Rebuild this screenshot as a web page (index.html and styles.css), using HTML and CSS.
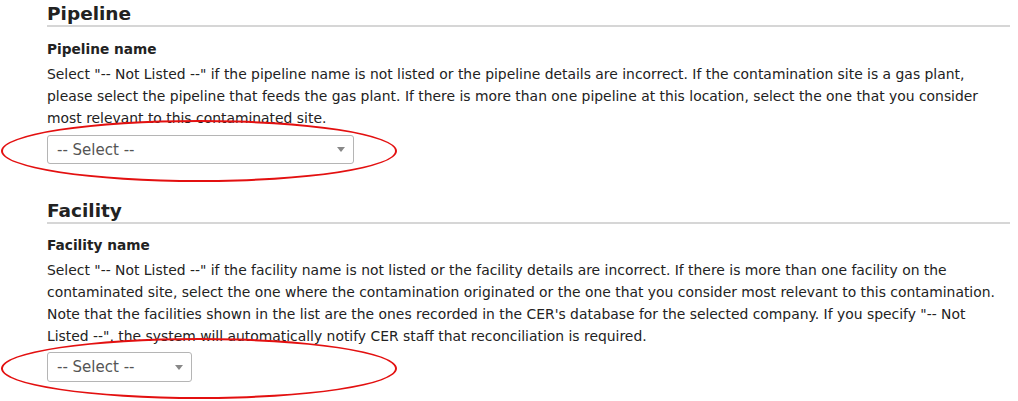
FILE: index.html
```html
<!DOCTYPE html>
<html>
<head>
<meta charset="utf-8">
<link rel="stylesheet" href="styles.css">
</head>
<body>
<div class="page">
  <section class="group">
    <h2 class="group-title">Pipeline</h2>
    <div class="field">
      <h3 class="field-label">Pipeline name</h3>
      <p class="field-help">Select "-- Not Listed --" if the pipeline name is not listed or the pipeline details are incorrect. If the contamination site is a gas plant, please select the pipeline that feeds the gas plant. If there is more than one pipeline at this location, select the one that you consider most relevant to this contaminated site.</p>
      <div class="select select-wide"><span>-- Select --</span><i class="caret"></i></div>
    </div>
  </section>
  <section class="group group-second">
    <h2 class="group-title">Facility</h2>
    <div class="field">
      <h3 class="field-label">Facility name</h3>
      <p class="field-help">Select "-- Not Listed --" if the facility name is not listed or the facility details are incorrect. If there is more than one facility on the contaminated site, select the one where the contamination originated or the one that you consider most relevant to this contamination. Note that the facilities shown in the list are the ones recorded in the CER's database for the selected company. If you specify "-- Not Listed --", the system will automatically notify CER staff that reconciliation is required.</p>
      <div class="select select-narrow"><span>-- Select --</span><i class="caret"></i></div>
    </div>
  </section>
  <div class="ring ring-one"></div>
  <div class="ring ring-two"></div>
</div>
</body>
</html>
```
FILE: styles.css
```css
html, body {
  margin: 0;
  padding: 0;
  background: #fff;
}
body {
  font-family: "DejaVu Sans", Verdana, sans-serif;
  color: #222;
}
.page {
  position: relative;
  width: 1018px;
  height: 401px;
  overflow: hidden;
  padding: 0 8px 0 47px;
  box-sizing: border-box;
}
.group-title {
  margin: 0;
  font-size: 18.5px;
  font-weight: bold;
  line-height: 22px;
  padding-top: 3px;
  border-bottom: 2px solid #d6d6d6;
  color: #222;
}
.group-second {
  margin-top: 33px;
}
.group-second .field-label {
  margin-top: 12px;
}
.field-label {
  margin: 13px 0 0 0;
  font-size: 13.7px;
  font-weight: bold;
  line-height: 18px;
}
.field-help {
  margin: 5px 0 0 0;
  font-size: 13.9px;
  line-height: 22px;
  color: #222;
}
.select {
  margin-top: 6px;
  box-sizing: border-box;
  height: 29px;
  border: 1px solid #b5b5b5;
  border-radius: 3px;
  display: flex;
  align-items: center;
  justify-content: space-between;
  padding: 0 8px 0 9px;
  font-size: 15px;
  color: #555;
}
.select-wide { width: 307px; }
.select-narrow { width: 145px; height: 30px; margin-top: 5px; }
.caret {
  width: 0;
  height: 0;
  border-left: 4px solid transparent;
  border-right: 4px solid transparent;
  border-top: 5px solid #888;
}
.ring {
  position: absolute;
  border: 2px solid #e31010;
  border-radius: 50%;
  box-sizing: border-box;
}
.ring-one { left: 1px; top: 120px; width: 396px; height: 62px; }
.ring-two { left: 1px; top: 338px; width: 396px; height: 61px; }
```
